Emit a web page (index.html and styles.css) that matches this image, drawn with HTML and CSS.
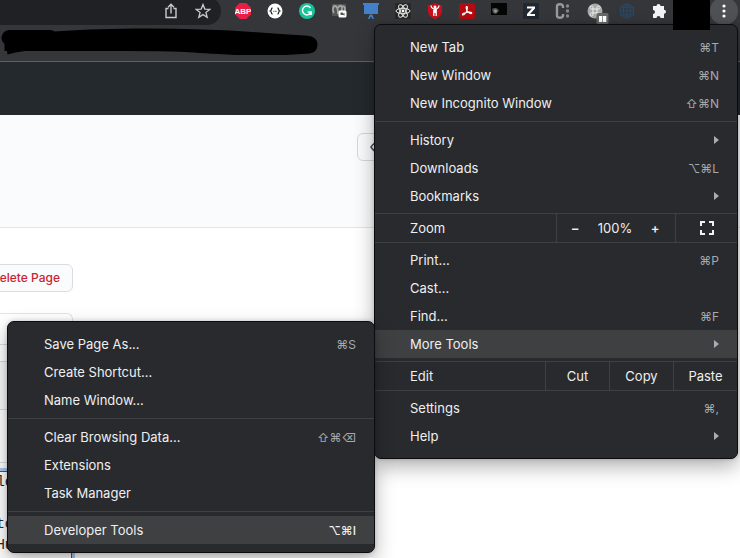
FILE: index.html
```
<!DOCTYPE html>
<html lang="en">
<head>
<meta charset="utf-8">
<title>Edit Page</title>
<link rel="stylesheet" href="styles.css">
</head>
<body>
<header class="chrome">
  <div class="toolbar">
    <div class="omnibox">
      <button class="tool" aria-label="Share"><svg width="16" height="16" viewBox="0 0 16 16" fill="none" stroke="#c8cacd" stroke-width="1.4"><path d="M5.500 5.500H3v9h10v-9h-2.500M8 10.500V1.500M5 4.300 8 1.300l3 3"/></svg></button>
      <button class="tool" aria-label="Bookmark"><svg width="16" height="16" viewBox="0 0 16 16" fill="none" stroke="#c8cacd" stroke-width="1.300"><path d="m8 1.500 1.800 4.600 4.900.3-3.800 3.100 1.300 4.800L8 11.600l-4.200 2.700 1.300-4.800L1.300 6.400l4.900-.3z"/></svg></button>
    </div>
    <div class="extensions">
      <button class="tool" aria-label="Ad blocker"><svg width="16" height="16" viewBox="0 0 16 16"><path d="M4.700 0h6.600L16 4.700v6.600L11.300 16H4.700L0 11.300V4.700z" fill="#e91e45"/><text x="8" y="11" class="abp" text-anchor="middle">ABP</text></svg></button>
      <button class="tool" aria-label="JSON viewer"><svg width="16" height="16" viewBox="0 0 16 16"><circle cx="8" cy="8" r="7.500" fill="#fff"/><path d="M5.500 5C4 5 4.800 7.500 3.400 8c1.400.5.600 3 2.100 3M10.500 5c1.500 0 .7 2.500 2.100 3-1.400.5-.6 3-2.100 3" fill="none" stroke="#222" stroke-width="1.300"/><path d="M6.300 8.300h3.600" stroke="#444" stroke-dasharray="1 .5"/></svg></button>
      <button class="tool" aria-label="Grammar"><svg width="16" height="16" viewBox="0 0 16 16"><circle cx="8" cy="8" r="8" fill="#18c39a"/><path d="M11.500 5A4.400 4.400 0 1 0 12 9H8.700M12.100 9v3" fill="none" stroke="#fff" stroke-width="1.500"/></svg></button>
      <button class="tool" aria-label="Recorder"><svg width="16" height="16" viewBox="0 0 16 16"><path d="M1 1h14v12H1z" fill="#555"/><path d="M3 10C1 7 2 3 4 3s3 4 3 8M7 5c1-3 4-3 4 0s0 4-1 5M11 4c3-2 4 2 2 5" stroke="#a5a5a5" stroke-width="1.800" fill="none"/><rect x="7.500" y="7.500" width="8" height="7" rx="1.500" fill="#fff"/><path d="M9.500 9.500H12V12H9.500zM12 10.700l1.500-1v3l-1.500-1z" fill="#555"/></svg></button>
      <button class="tool" aria-label="Presentation"><svg width="16" height="16" viewBox="0 0 16 16"><path d="M0 0h16v2H0zM1 2h14v9H1z" fill="#4480c8"/><path d="M7.500 11h1v2h-1zM5 16l1.500-4h3l1.500 4H9.500L8 13.500 6.500 16z" fill="#4480c8"/></svg></button>
      <button class="tool" aria-label="React tools"><svg width="16" height="16" viewBox="0 0 16 16"><path fill="#282828" d="M0 0h16v16H0z"/><g fill="none" stroke="#e7e7e7" stroke-width="1"><ellipse cx="8" cy="8" rx="7" ry="2.700"/><ellipse cx="8" cy="8" rx="7" ry="2.700" transform="rotate(60 8 8)"/><ellipse cx="8" cy="8" rx="7" ry="2.700" transform="rotate(120 8 8)"/></g><circle cx="8" cy="8" r="1.400" fill="#fff"/></svg></button>
      <button class="tool" aria-label="Shield"><svg width="16" height="16" viewBox="0 0 16 16"><path d="M8 0c2 1.500 4 2 7 2v6c0 4-3 6.500-7 8-4-1.500-7-4-7-8V2c3 0 5-.5 7-2z" fill="#c8101a"/><circle cx="8" cy="4" r="1.500" fill="#fff"/><path d="M4 2.500c.3 2.500 1.500 3.500 4 3.500s3.700-1 4-3.500M8 6v4M6.800 6v7M9.200 6v7" fill="none" stroke="#fff" stroke-width="1.300"/></svg></button>
      <button class="tool" aria-label="PDF"><svg width="16" height="16" viewBox="0 0 16 16"><rect width="16" height="16" rx="2.500" fill="#b30b0f"/><path d="M7.300 3.500c1.500-.5 1.200 2 .6 3.800C7.200 9.500 5 12.500 3.600 12c-1-1 2-2.500 5.400-2.800 2.500-.2 4.200.3 3.700 1.200-1 1-4.500-1.500-5.200-4-.4-1.400-.6-2.600-.2-2.900z" fill="none" stroke="#fff" stroke-width="1.100"/></svg></button>
      <button class="tool" aria-label="Capture"><svg width="16" height="16" viewBox="0 0 16 16"><path d="M0 0h16v12H0z" fill="#050505"/><path d="M1 6c3-2 6-1 7 2l-3 3-3-1z" fill="#555"/><circle cx="4.500" cy="8" r="1.500" fill="#999"/></svg></button>
      <button class="tool" aria-label="Zotero"><svg width="16" height="16" viewBox="0 0 16 16"><path fill="#202832" d="M0 0h16v16H0z"/><path d="M4 3.500h8v2L7 11h5v2H4v-2l5-5.500H4z" fill="#fff"/></svg></button>
      <button class="tool" aria-label="Citations"><svg width="16" height="16" viewBox="0 0 16 16"><path d="M8 5V3.500C8 .5 2 .5 2 3.500v9c0 3 6 3 6 0V11" fill="none" stroke="#999" stroke-width="2.400"/><g fill="#888"><circle cx="12.500" cy="3" r="1.700"/><circle cx="12.500" cy="8" r="1.700"/><circle cx="12.500" cy="13" r="1.700"/></g></svg></button>
      <button class="tool" aria-label="Shortcuts"><svg width="22" height="22" viewBox="0 0 22 22"><circle cx="8" cy="8" r="7.500" fill="#aaa"/><path d="M6 6h4v4H6zM6 6H4.500A1.500 1.500 0 1 1 6 4.500zM10 6V4.500A1.500 1.500 0 1 1 11.500 6zM10 10h1.500a1.500 1.500 0 1 1-1.500 1.500zM6 10v1.500A1.500 1.500 0 1 1 4.500 10z" fill="none" stroke="#eee"/><rect x="9.500" y="10" width="12" height="11" rx="1.500" fill="#686868"/><path d="M12 13h3.300v6H12zM16 13h3.300v6H16z" fill="#fff"/></svg></button>
      <button class="tool" aria-label="Network"><svg width="16" height="16" viewBox="0 0 16 16" fill="none" stroke="#294967" stroke-width="1"><path d="m8 .7 6.500 3.500v7.600L8 15.300l-6.500-3.500V4.200zM1.500 4.200h13M1.500 8h13M1.500 11.800h13M8 .7v14.600M8 .7 4.500 4.200v7.600L8 15.300l3.500-3.500V4.200z"/></svg></button>
      <button class="tool" aria-label="Extensions"><svg width="16" height="16" viewBox="0 0 16 16"><path d="M2 3h3.500a2 2 0 1 1 4 0H13v3.700a2 2 0 1 1 0 4V15H9.500a2 2 0 1 0-4 0H2v-4a2 2 0 1 0 0-4z" fill="#f2f3f4"/></svg></button>
    </div>
    <button class="more" aria-label="Customize and control"><svg width="4" height="14" viewBox="0 0 4 14" fill="#fff"><circle cx="2" cy="2" r="1.600"/><circle cx="2" cy="7" r="1.600"/><circle cx="2" cy="12" r="1.600"/></svg></button>
    <div class="redacted"></div>
  </div>
  <div class="bookmarks"><svg width="320" height="28" viewBox="0 0 320 28"><path d="M9 2h41q3 0 4.500 1.500Q85 1 135 .5q65-.5 125 4 25 2 48 3.300 9 1 9.500 8.500 0 8-8 9.200-12 .5-24 1.500h-50Q200 25 185 24q-25-1-60-1H25q-10 1-17.500 3.500L7 23H4.500v-7Q1 13 1.500 9 2.500 3 9 2z"/></svg></div>
</header>

<nav class="menu app-menu" aria-label="Browser menu">
  <button class="item">New Tab<kbd>⌘T</kbd></button>
  <button class="item">New Window<kbd>⌘N</kbd></button>
  <button class="item">New Incognito Window<kbd>⇧⌘N</kbd></button>
  <hr>
  <button class="item">History<i class="arrow"></i></button>
  <button class="item">Downloads<kbd>⌥⌘L</kbd></button>
  <button class="item">Bookmarks<i class="arrow"></i></button>
  <div class="row">
    <span class="row-label">Zoom</span>
    <div class="zoom"><button class="step" aria-label="Zoom out">−</button><span class="level">100%</span><button class="step" aria-label="Zoom in">+</button></div>
    <button class="cell full" aria-label="Full screen"><svg width="14" height="14" viewBox="0 0 14 14" fill="none" stroke="#f1f1f1" stroke-width="2"><path d="M1 5V1h4M9 1h4v4M13 9v4H9M5 13H1V9"/></svg></button>
  </div>
  <button class="item">Print...<kbd>⌘P</kbd></button>
  <button class="item">Cast...</button>
  <button class="item">Find...<kbd>⌘F</kbd></button>
  <div class="parent">
    <button class="item active" aria-expanded="true">More Tools<i class="arrow"></i></button>
    <div class="menu submenu">
      <button class="item">Save Page As...<kbd>⌘S</kbd></button>
      <button class="item">Create Shortcut...</button>
      <button class="item">Name Window...</button>
      <hr>
      <button class="item">Clear Browsing Data...<kbd>⇧⌘⌫</kbd></button>
      <button class="item">Extensions</button>
      <button class="item">Task Manager</button>
      <hr>
      <button class="item active">Developer Tools<kbd>⌥⌘I</kbd></button>
    </div>
  </div>
  <div class="row">
    <span class="row-label">Edit</span>
    <button class="cell">Cut</button>
    <button class="cell">Copy</button>
    <button class="cell">Paste</button>
  </div>
  <button class="item">Settings<kbd>⌘,</kbd></button>
  <button class="item">Help<i class="arrow"></i></button>
</nav>

<div class="site-header"></div>
<div class="page-head">
  <button class="watch" aria-label="Watch"><svg width="16" height="16" viewBox="0 0 16 16" fill="none" stroke="#444d56" stroke-width="1.500"><path d="M1 8c4-6.500 10-6.500 14 0-4 6.500-10 6.500-14 0z"/><circle cx="8" cy="8" r="2"/></svg></button>
</div>
<main class="editor">
  <button class="delete">Delete Page</button>
  <div class="panel">
    <div class="tabs"></div>
    <div class="tools"></div>
    <div class="mode"></div>
    <div class="hint"></div>
    <textarea class="source" aria-label="Page source" spellcheck="false">ble

sto
 Hu</textarea>
  </div>
</main>
</body>
</html>
```
FILE: styles.css
```
* { box-sizing: border-box; }

body {
  display: flex;
  flex-direction: column;
  margin: 0;
  height: 100vh;
  overflow: hidden;
  position: relative;
  background: #fff;
  font-family: Inter, "Liberation Sans", sans-serif;
  font-size: 13px;
}

button {
  margin: 0;
  padding: 0;
  border: 0;
  background: none;
  color: inherit;
  font: inherit;
}

svg { display: block; }

/* Browser chrome */
.chrome {
  background: #35363a;
  border-bottom: 1px solid #5f6264;
}

.toolbar {
  position: relative;
  display: flex;
  height: 25px;
}

.omnibox {
  display: flex;
  align-items: center;
  justify-content: flex-end;
  gap: 16px;
  width: 221px;
  height: 28px;
  margin-top: -3px;
  padding-right: 10px;
  border-radius: 0 14px 14px 0;
  background: #202124;
}

.tool {
  width: 16px;
  height: 16px;
  flex: none;
}

.extensions {
  display: flex;
  gap: 16px;
  padding: 3px 0 0 14px;
}

.abp {
  font: 700 8px "Liberation Sans", sans-serif;
  fill: #fff;
}

.more {
  display: grid;
  place-items: center;
  width: 28px;
  height: 28px;
  margin: -3px 2px 0 auto;
  border-radius: 50%;
  background: #505155;
}

.redacted {
  position: absolute;
  z-index: 3;
  top: 0;
  right: 30px;
  width: 37px;
  height: 30px;
  background: #000;
}

.bookmarks {
  height: 36px;
  padding-top: 3px;
}

/* Menus */
.menu {
  position: absolute;
  padding: 8px 0;
  border: 1px solid #0c0c0d;
  border-radius: 7px;
  background: #292a2d;
  box-shadow: 0 8px 20px rgba(0, 0, 0, 0.3), 0 0 4px rgba(0, 0, 0, 0.2);
  color: #eeeff0;
}

.app-menu {
  z-index: 2;
  top: 24px;
  right: 2px;
  width: 364px;
}

.submenu {
  top: -9px;
  right: 100%;
  width: 368px;
}

.parent { position: relative; }

.item {
  display: flex;
  align-items: center;
  justify-content: space-between;
  width: 100%;
  height: 28px;
  padding: 0 18px 0 35px;
  text-align: left;
}

.submenu .item { padding-left: 36px; }

.active { background: #3f4042; }

kbd {
  color: #a4a9ae;
  font: inherit;
  font-size: 12px;
}

.active kbd {
  color: #eeeff0;
  font-weight: 500;
}

.arrow {
  border: solid transparent;
  border-width: 4px 0 4px 5px;
  border-left-color: #a9acb0;
}

.menu hr {
  margin: 4px 0;
  border: 0;
  border-top: 1px solid #3f4043;
}

.row {
  display: flex;
  align-items: stretch;
  height: 30px;
  margin: 3px 0;
  border: solid #3f4043;
  border-width: 1px 0;
}

.row-label {
  flex: 1;
  padding-left: 35px;
  line-height: 28px;
}

.cell {
  width: 64px;
  border-left: 1px solid #3f4043;
}

.zoom {
  display: flex;
  align-items: center;
  justify-content: space-between;
  width: 119px;
  padding: 0 15px 0 13px;
  border-left: 1px solid #3f4043;
}

.step {
  width: 10px;
  font-weight: 600;
}

.full {
  display: grid;
  place-items: center;
  width: 62px;
}

/* Page */
.site-header {
  height: 53px;
  background: #24292e;
}

.page-head {
  height: 113px;
  padding-top: 18px;
  border-bottom: 1px solid #e1e4e8;
  background: #fafbfc;
}

.watch {
  display: flex;
  align-items: center;
  width: 96px;
  height: 28px;
  margin-left: 357px;
  padding-left: 12px;
  border: 1px solid #d5d8dc;
  border-radius: 6px;
}

.editor {
  display: flex;
  flex: 1;
  flex-direction: column;
  align-items: flex-end;
  min-height: 0;
  width: 93px;
  margin-left: -20px;
  padding-top: 36px;
}

.delete {
  flex: none;
  height: 28px;
  padding: 0 12px;
  border: 1px solid #d9dce0;
  border-radius: 6px;
  background: #fafbfc;
  color: #cb2431;
  font-size: 12px;
  font-weight: 500;
  line-height: 24px;
  white-space: nowrap;
}

.panel {
  display: flex;
  flex: 1;
  flex-direction: column;
  min-height: 0;
  width: 100%;
  margin-top: 21px;
  border: 1px solid #e1e4e8;
  border-bottom: 0;
  border-radius: 6px 6px 0 0;
}

.tabs {
  height: 31px;
  border-bottom: 1px solid #d8dce2;
}

.tools {
  height: 17px;
  border-bottom: 1px solid #d8dce2;
}

.mode {
  height: 48px;
  border-bottom: 1px solid #d8dce2;
  background: #f6f8fa;
}

.hint {
  height: 53px;
  border-bottom: 1px solid #d8dce2;
}

.tabs, .tools, .mode, .hint { flex: none; }

.source {
  flex: 1;
  min-height: 0;
  width: 100%;
  margin-top: 8px;
  padding: 0 6px;
  border: 1px solid #0366d6;
  border-bottom: 0;
  border-radius: 0;
  outline: 0;
  box-shadow: 0 0 0 3px #abc9ee;
  resize: none;
  overflow: hidden;
  background: #fff;
  color: #24292e;
  font: 14px/21px "Liberation Mono", monospace;
}
```
